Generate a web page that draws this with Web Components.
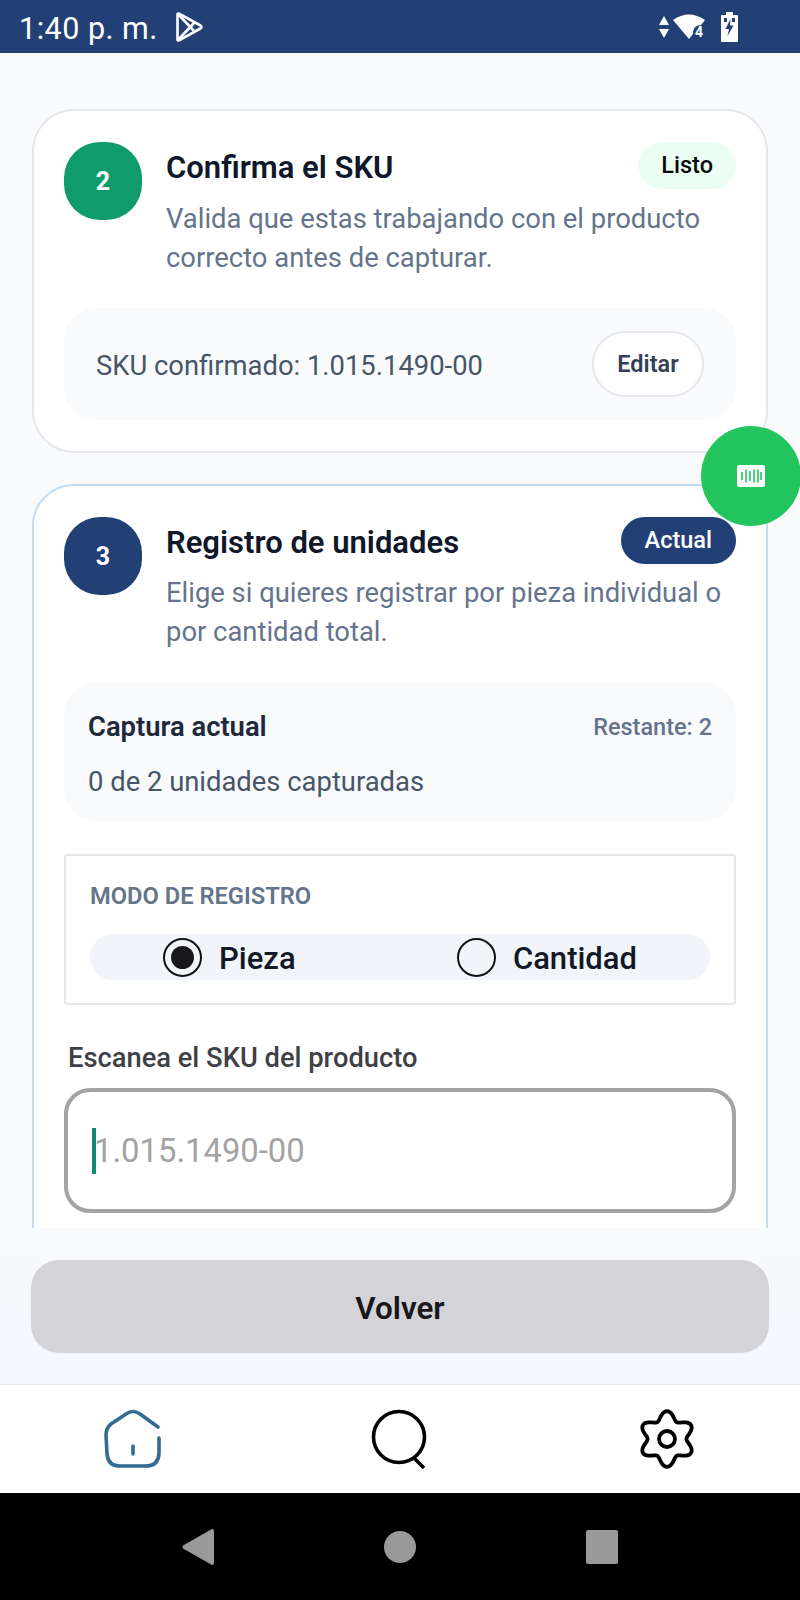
<!DOCTYPE html>
<html lang="es">
<head>
<meta charset="utf-8">
<title>Registro de unidades</title>
<style>
  html, body { margin: 0; padding: 0; background: #f8fafc; font-family: Roboto, "Liberation Sans", sans-serif; }
</style>
</head>
<body>
<app-screen>
  <status-bar slot="status"></status-bar>

  <step-card number="2" tone="done" heading="Confirma el SKU" badge="Listo">
    Valida que estas trabajando con el producto correcto antes de capturar.
    <sku-panel slot="body" sku="1.015.1490-00"></sku-panel>
  </step-card>

  <step-card number="3" tone="current" heading="Registro de unidades" badge="Actual">
    Elige si quieres registrar por pieza individual o por cantidad total.
    <capture-panel slot="body" remaining="2" summary="0 de 2 unidades capturadas"></capture-panel>
    <mode-picker slot="body"></mode-picker>
    <sku-input slot="body" label="Escanea el SKU del producto" placeholder="1.015.1490-00"></sku-input>
  </step-card>

  <scan-fab slot="fab"></scan-fab>
  <back-footer slot="footer"></back-footer>
  <tab-bar slot="tabs"></tab-bar>
  <system-nav slot="system"></system-nav>
</app-screen>

<script>
class AppScreen extends HTMLElement {
  constructor() {
    super();
    this.shadowDOM = this.attachShadow({ mode: 'open' });
  }

  connectedCallback() {
    this.shadowDOM.innerHTML = `
      <style>
        :host { display: flex; flex-direction: column; position: relative; width: 800px; height: 1600px; overflow: hidden; background: #f8fafc; }
        .scroll { flex: 1; min-height: 0; overflow: hidden; display: flex; flex-direction: column; gap: 33px; padding: 56px 32px 0; box-sizing: border-box; }
      </style>
      <slot name="status"></slot>
      <div class="scroll"><slot></slot></div>
      <slot name="fab"></slot>
      <slot name="footer"></slot>
      <slot name="tabs"></slot>
      <slot name="system"></slot>
    `;
  }
}

class StatusBar extends HTMLElement {
  constructor() {
    super();
    this.shadowDOM = this.attachShadow({ mode: 'open' });
  }

  connectedCallback() {
    this.shadowDOM.innerHTML = `
      <style>
        :host { display: flex; align-items: center; flex: none; height: 53px; padding-left: 19px; background: #224076; color: #fff; box-sizing: border-box; }
        .time { font-size: 30.500px; line-height: 53px; letter-spacing: .5px; padding-top: 3px; }
        .play { margin-left: 16px; }
        .right { margin-left: auto; margin-right: 62px; display: flex; align-items: center; gap: 4px; }
        svg { display: block; }
      </style>
      <span class="time">1:40 p. m.</span>
      <svg class="play" width="30" height="32" viewBox="0 0 30 32" fill="none" stroke="#fff" stroke-width="2.600" stroke-linejoin="round">
        <path d="M3.500 3.500Q3.500 1.800 5.500 2.800L26.500 14.500Q28.500 16 26.500 17.500L5.500 29.200Q3.500 30.200 3.500 28.500Z"/>
        <path d="M4 3L21 21M4 29L21 11"/>
      </svg>
      <div class="right">
        <svg width="10" height="24" viewBox="0 0 10 24" fill="#fff"><path d="M5 1L10 10H0ZM5 23L0 14H10Z"/></svg>
        <svg width="33" height="28" viewBox="0 0 33 28">
          <path fill="#fff" d="M0 7Q16 -4 32 7L28 12Q21 12 20 19V21L16 26Z"/>
          <text x="22" y="24" font-family="Roboto, sans-serif" font-size="14" font-weight="700" fill="#fff">4</text>
        </svg>
        <svg style="margin-left:11px" width="17" height="30" viewBox="0 0 17 30">
          <path fill="#fff" d="M5 0H12V3H16Q17 3 17 4V29Q17 30 16 30H1Q0 30 0 29V4Q0 3 1 3H5Z"/>
          <path fill="#224076" d="M9.500 7L4.500 17H8L6.500 24L12.500 13.500H9Z M3 6H6V10H3Z M11 6H14V10H11Z"/>
        </svg>
      </div>
    `;
  }
}

class StepCard extends HTMLElement {
  constructor() {
    super();
    this.shadowDOM = this.attachShadow({ mode: 'open' });
  }

  connectedCallback() {
    const current = this.getAttribute('tone') === 'current';
    // the current step runs on below the fold, so its bottom edge must stay clipped
    this.shadowDOM.innerHTML = `
      <style>
        :host { display: block; flex: none; background: #fff; border: 2px solid ${current ? '#c5dcf0' : '#e5e7eb'}; border-radius: 42px; padding: ${current ? '31px' : '31px'} 30px ${current ? '80px' : '31px'}; box-sizing: border-box; margin-top: ${current ? '-2px' : '0'}; }
        .head { display: flex; gap: 24px; }
        .step { flex: none; width: 78px; height: 78px; border-radius: 36px; display: flex; align-items: center; justify-content: center; background: ${current ? '#224076' : '#0f9b6c'}; color: #fff; font-size: 25px; font-weight: 700; }
        .text { flex: 1; min-width: 0; }
        .row { display: flex; justify-content: space-between; align-items: center; height: 47px; margin-bottom: ${current ? '10px' : '11px'}; }
        h2 { margin: 0; padding-top: 3px; font-size: 31px; font-weight: 600; color: #0f172a; }
        .badge { height: 47px; line-height: 47px; border-radius: 24px; padding: 0 ${current ? '24px' : '23px'}; font-size: 23.500px; font-weight: 500; background: ${current ? '#224076' : '#ecfdf3'}; color: ${current ? '#fff' : '#0a0a0a'}; }
        .desc { font-size: 27.400px; line-height: 39px; color: #64748b; }
        .body { display: flex; flex-direction: column; margin-top: 30px; }
      </style>
      <div class="head">
        <div class="step">${this.getAttribute('number')}</div>
        <div class="text">
          <div class="row"><h2>${this.getAttribute('heading')}</h2><span class="badge">${this.getAttribute('badge')}</span></div>
          <div class="desc"><slot></slot></div>
        </div>
      </div>
      <div class="body"><slot name="body"></slot></div>
    `;
  }
}

class SkuPanel extends HTMLElement {
  constructor() {
    super();
    this.shadowDOM = this.attachShadow({ mode: 'open' });
  }

  connectedCallback() {
    this.shadowDOM.innerHTML = `
      <style>
        :host { display: flex; align-items: center; justify-content: space-between; height: 112px; padding: 0 32px; background: #f8fafc; border-radius: 32px; box-sizing: border-box; }
        .label { font-size: 27.400px; color: #475569; padding-top: 3px; }
        button { width: 112px; height: 66px; background: #fff; border: 2px solid #e5e7eb; border-radius: 33px; font: 600 23.500px Roboto, sans-serif; color: #334155; padding: 0; }
      </style>
      <span class="label">SKU confirmado: ${this.getAttribute('sku')}</span>
      <button>Editar</button>
    `;
  }
}

class CapturePanel extends HTMLElement {
  constructor() {
    super();
    this.shadowDOM = this.attachShadow({ mode: 'open' });
  }

  connectedCallback() {
    this.shadowDOM.innerHTML = `
      <style>
        :host { display: block; height: 139px; margin-bottom: 33px; padding: 25px 24px; background: #f8fafc; border-radius: 32px; box-sizing: border-box; }
        .top { display: flex; justify-content: space-between; align-items: center; height: 40px; margin-bottom: 15px; }
        strong { font-size: 27.400px; font-weight: 600; color: #1e293b; }
        .left { font-size: 23.500px; font-weight: 500; color: #64748b; }
        .sum { font-size: 27.400px; line-height: 40px; color: #475569; }
      </style>
      <div class="top"><strong>Captura actual</strong><span class="left">Restante: ${this.getAttribute('remaining')}</span></div>
      <div class="sum">${this.getAttribute('summary')}</div>
    `;
  }
}

class ModePicker extends HTMLElement {
  constructor() {
    super();
    this.shadowDOM = this.attachShadow({ mode: 'open' });
  }

  connectedCallback() {
    this.shadowDOM.innerHTML = `
      <style>
        :host { display: block; height: 151px; padding: 21px 24px 0; background: #fff; border: 2px solid #e5e7eb; border-radius: 3px; box-sizing: border-box; }
        .label { height: 38px; line-height: 38px; font-size: 23.700px; font-weight: 600; color: #64748b; }
        .group { display: flex; justify-content: space-between; height: 46px; margin-top: 19px; padding: 0 73px; background: #f1f5f9; border-radius: 23px; }
        .opt { display: flex; align-items: center; gap: 17px; font-size: 31px; font-weight: 500; color: #111827; }
        .opt span:last-child { padding-top: 2px; }
        .radio { width: 39px; height: 39px; border: 2px solid #111; border-radius: 50%; box-sizing: border-box; display: flex; align-items: center; justify-content: center; }
        .radio i { width: 23px; height: 23px; border-radius: 50%; background: #18181b; }
      </style>
      <div class="label">MODO DE REGISTRO</div>
      <div class="group">
        <div class="opt"><b class="radio"><i></i></b><span>Pieza</span></div>
        <div class="opt"><b class="radio"></b><span>Cantidad</span></div>
      </div>
    `;
  }
}

class SkuInput extends HTMLElement {
  constructor() {
    super();
    this.shadowDOM = this.attachShadow({ mode: 'open' });
  }

  connectedCallback() {
    this.shadowDOM.innerHTML = `
      <style>
        :host { display: block; padding-top: 33px; }
        label { display: block; height: 40px; line-height: 40px; padding-left: 4px; font-size: 27.300px; font-weight: 500; color: #3f3f46; }
        .field { display: flex; align-items: center; position: relative; height: 125px; margin-top: 10px; padding-left: 26px; border: 4px solid #a3a3a3; border-radius: 26px; background: #fff; box-sizing: border-box; font-size: 32.800px; color: #a3a3a3; }
        .caret { position: absolute; left: 24px; top: 36px; width: 4px; height: 46px; background: #0f8a70; }
      </style>
      <label>${this.getAttribute('label')}</label>
      <div class="field"><span class="caret"></span>${this.getAttribute('placeholder')}</div>
    `;
  }
}

class ScanFab extends HTMLElement {
  constructor() {
    super();
    this.shadowDOM = this.attachShadow({ mode: 'open' });
  }

  connectedCallback() {
    this.shadowDOM.innerHTML = `
      <style>
        :host { position: absolute; left: 701px; top: 426px; width: 100px; height: 100px; border-radius: 50%; background: #22c55e; display: flex; align-items: center; justify-content: center; }
      </style>
      <svg width="28" height="22" viewBox="0 0 28 22">
        <rect width="28" height="22" rx="2.500" fill="#fff"/>
        <path stroke="#22c55e" stroke-width="1.600" d="M5 7V15M9 4.500V17.500M13 6V16M17 4.500V17.500M21 4.500V17.500M24 7V15"/>
      </svg>
    `;
  }
}

class BackFooter extends HTMLElement {
  constructor() {
    super();
    this.shadowDOM = this.attachShadow({ mode: 'open' });
  }

  connectedCallback() {
    this.shadowDOM.innerHTML = `
      <style>
        :host { display: block; flex: none; position: relative; height: 156px; padding: 32px 31px 0; background: linear-gradient(#f8fafc, #f3f6fc); box-sizing: border-box; }
        button { display: block; width: 100%; height: 93px; border: 0; border-radius: 28px; background: #d4d4d8; font: 600 31.400px Roboto, sans-serif; color: #18181b; padding: 3px 0 0; }
      </style>
      <button>Volver</button>
    `;
  }
}

class TabBar extends HTMLElement {
  constructor() {
    super();
    this.shadowDOM = this.attachShadow({ mode: 'open' });
  }

  gearPath() {
    // six soft lobes, one of them pointing straight up
    const points = [];
    for (let i = 0; i < 120; i++) {
      const a = (i / 120) * Math.PI * 2;
      const r = 23.6 + 4.2 * Math.cos(6 * a);
      points.push(`${(30 + r * Math.sin(a)).toFixed(2)} ${(30 - r * Math.cos(a)).toFixed(2)}`);
    }
    return `M${points.join('L')}Z`;
  }

  connectedCallback() {
    this.shadowDOM.innerHTML = `
      <style>
        :host { display: grid; grid-template-columns: repeat(3, 1fr); flex: none; height: 109px; background: #fff; border-top: 1px solid #e5e7eb; box-sizing: border-box; }
        .tab { display: flex; align-items: center; justify-content: center; padding-bottom: 1px; }
        svg { display: block; fill: none; stroke-linecap: round; stroke-linejoin: round; }
      </style>
      <div class="tab">
        <svg width="60" height="60" viewBox="0 0 60 60" stroke="#336b93" stroke-width="3.600">
          <path d="M55 18L37 5Q30 0 23 5L8 15Q3 19 3 26L4 45Q5 57 17 57H43Q55 57 56 45V29"/>
          <path d="M30 37V45"/>
        </svg>
      </div>
      <div class="tab">
        <svg width="60" height="60" viewBox="0 0 60 60" stroke="#000" stroke-width="3.600">
          <circle cx="29" cy="28" r="25.500"/>
          <path d="M44 49L54 59" stroke-linecap="butt"/>
        </svg>
      </div>
      <div class="tab">
        <svg width="60" height="60" viewBox="0 0 60 60" stroke="#000" stroke-width="3.800">
          <circle cx="30" cy="30" r="8"/>
          <path d="${this.gearPath()}"/>
        </svg>
      </div>
    `;
  }
}

class SystemNav extends HTMLElement {
  constructor() {
    super();
    this.shadowDOM = this.attachShadow({ mode: 'open' });
  }

  connectedCallback() {
    this.shadowDOM.innerHTML = `
      <style>
        :host { display: flex; flex: none; align-items: center; justify-content: center; gap: 170px; height: 107px; background: #000; box-sizing: border-box; }
        svg { display: block; fill: #999; }
      </style>
      <svg width="32" height="36" viewBox="0 0 32 36"><path d="M30 0Q32 0 32 2V34Q32 36 30 36L1 19.500Q0 18 1 16.500Z"/></svg>
      <svg width="32" height="32" viewBox="0 0 32 32"><circle cx="16" cy="16" r="16"/></svg>
      <svg width="32" height="34" viewBox="0 0 32 34"><rect width="32" height="34" rx="2"/></svg>
    `;
  }
}

customElements.define('app-screen', AppScreen);
customElements.define('status-bar', StatusBar);
customElements.define('step-card', StepCard);
customElements.define('sku-panel', SkuPanel);
customElements.define('capture-panel', CapturePanel);
customElements.define('mode-picker', ModePicker);
customElements.define('sku-input', SkuInput);
customElements.define('scan-fab', ScanFab);
customElements.define('back-footer', BackFooter);
customElements.define('tab-bar', TabBar);
customElements.define('system-nav', SystemNav);
</script>
</body>
</html>
